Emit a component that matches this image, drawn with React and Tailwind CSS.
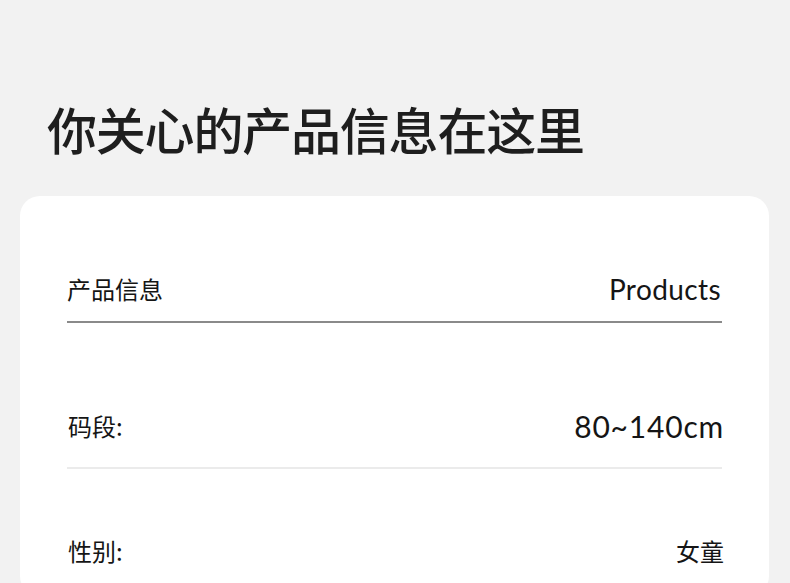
export default function App() {
  const rows = [
    { label: "码段:", value: "80~140cm", latin: true, pad: "pt-[85px] pb-[23px]" },
    { label: "性别:", value: "女童", latin: false, pad: "pt-[64px] pb-[21px]" },
  ]

  return (
    <div className="min-h-[583px] w-[790px] overflow-hidden bg-[#f2f2f2] text-[#151515]" style={{ fontFamily: '"Noto Sans CJK SC", "Noto Sans", sans-serif' }}>
      {/* 标题 */}
      <h1 className="pl-[47px] pt-[93px] text-[50px] font-medium leading-[70px] tracking-[-1.2px] text-[#1e1e1e]">
        你关心的产品信息在这里
      </h1>

      {/* 卡片 */}
      <div className="ml-[20px] mt-[33px] h-[400px] w-[749px] rounded-[20px] bg-white px-[47px] pt-[75px]">
        <div className="flex items-center justify-between border-b-2 border-[#8a8a8a] pb-[14px]">
          <span className="text-[24px] leading-[36px]">产品信息</span>
          <span className="mr-[1px] text-[28px] leading-[36px] tracking-[0.4px]" style={{ fontFamily: 'Lato, sans-serif' }}>Products</span>
        </div>

        {rows.map((row) => (
          <div key={row.label} className={`flex items-center justify-between border-b-2 border-[#ebebeb] pl-[1px] ${row.pad}`}>
            <span className="text-[24px] leading-[36px]">{row.label}</span>
            <span
              className={row.latin ? "-mr-[2px] text-[30px] leading-[36px] tracking-[0.8px]" : "-mr-[2px] text-[24px] leading-[36px]"}
              style={row.latin ? { fontFamily: 'Lato, sans-serif' } : undefined}
            >
              {row.value}
            </span>
          </div>
        ))}
      </div>
    </div>
  )
}
